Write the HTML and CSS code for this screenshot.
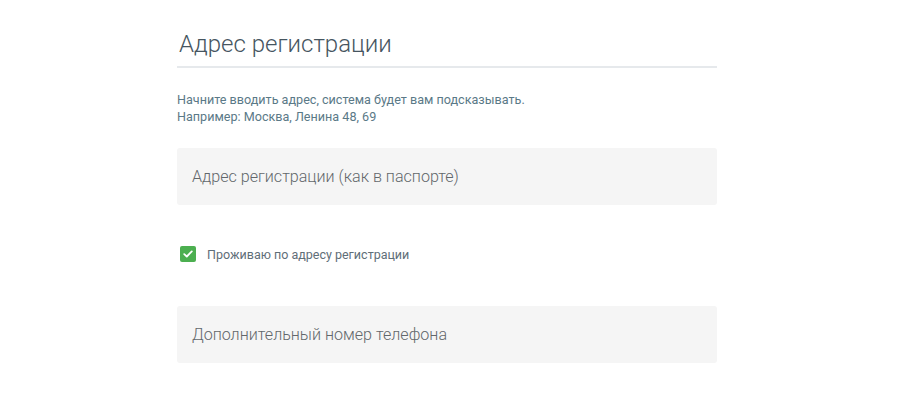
FILE: index.html
```html
<!DOCTYPE html>
<html lang="ru">
<head>
<meta charset="utf-8">
<link rel="stylesheet" href="styles.css">
</head>
<body>
<div class="form">
  <h2 class="title">Адрес регистрации</h2>
  <p class="hint">Начните вводить адрес, система будет вам подсказывать.<br>Например: Москва, Ленина 48, 69</p>
  <div class="field">Адрес регистрации (как в паспорте)</div>
  <label class="check">
    <span class="box"><svg width="10" height="8" viewBox="0 0 10 8"><path d="M1.2 4.1 L3.8 6.5 L8.8 1.4" fill="none" stroke="#fff" stroke-width="1.8" stroke-linecap="round" stroke-linejoin="round"/></svg></span>
    <span class="check-text">Проживаю по адресу регистрации</span>
  </label>
  <div class="field">Дополнительный номер телефона</div>
</div>
</body>
</html>
```
FILE: styles.css
```css
html, body {
  margin: 0;
  padding: 0;
  background: #fff;
  font-family: Roboto, "Liberation Sans", sans-serif;
}
.form {
  width: 540px;
  margin-left: 177px;
  padding-top: 30px;
}
.title {
  margin: 0;
  padding: 0 0 8px 2px;
  font-size: 24px;
  line-height: 28px;
  font-weight: 300;
  color: #46555f;
  border-bottom: 2px solid #e6e9ec;
}
.hint {
  margin: 23px 0 0 0;
  font-size: 12.6px;
  line-height: 17px;
  color: #5a7987;
}
.field {
  margin-top: 23px;
  height: 57px;
  box-sizing: border-box;
  padding: 0 15px;
  display: flex;
  align-items: center;
  background: #f5f5f5;
  border-radius: 3px;
  font-size: 16.1px;
  font-weight: 300;
  color: #62676b;
}
.check {
  display: flex;
  align-items: center;
  margin: 41px 0 44px 3px;
  gap: 11px;
}
.box {
  width: 16px;
  height: 16px;
  border-radius: 2px;
  background: #4caf50;
  display: flex;
  align-items: center;
  justify-content: center;
}
.check-text {
  font-size: 12.5px;
  color: #5f6e78;
}
```
